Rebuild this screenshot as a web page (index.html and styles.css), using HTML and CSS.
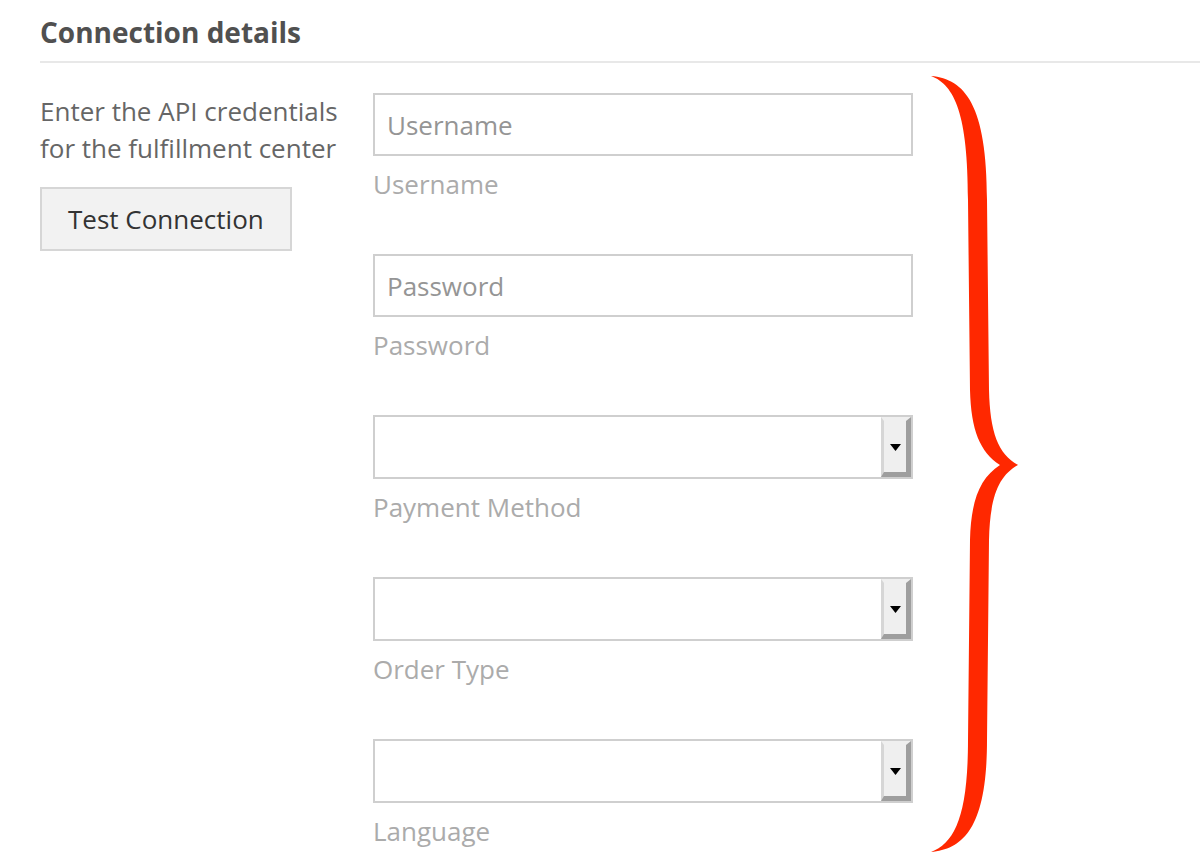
FILE: index.html
```html
<!DOCTYPE html>
<html lang="en">
<head>
<meta charset="utf-8">
<title>Connection details</title>
<link rel="stylesheet" href="styles.css">
</head>
<body>
<div class="page">
  <h2 class="section-title">Connection details</h2>
  <div class="section-row">
    <div class="intro">
      <p class="intro-text">Enter the API credentials for the fulfillment center</p>
      <button class="btn" type="button">Test Connection</button>
    </div>
    <div class="fields">
      <div class="field">
        <input class="text-input" type="text" placeholder="Username">
        <div class="field-label">Username</div>
      </div>
      <div class="field">
        <input class="text-input" type="password" placeholder="Password">
        <div class="field-label">Password</div>
      </div>
      <div class="field">
        <div class="select-box"><span class="select-value"></span><span class="select-btn"><svg class="select-arrow" width="11" height="7" viewBox="0 0 11 7"><path d="M0 0H11L5.5 7Z" fill="#000"/></svg></span></div>
        <div class="field-label">Payment Method</div>
      </div>
      <div class="field">
        <div class="select-box"><span class="select-value"></span><span class="select-btn"><svg class="select-arrow" width="11" height="7" viewBox="0 0 11 7"><path d="M0 0H11L5.5 7Z" fill="#000"/></svg></span></div>
        <div class="field-label">Order Type</div>
      </div>
      <div class="field">
        <div class="select-box"><span class="select-value"></span><span class="select-btn"><svg class="select-arrow" width="11" height="7" viewBox="0 0 11 7"><path d="M0 0H11L5.5 7Z" fill="#000"/></svg></span></div>
        <div class="field-label">Language</div>
      </div>
    </div>
  </div>
</div>
<svg class="brace" width="110" height="790" viewBox="920 70 110 790" aria-hidden="true">
  <path fill="#ff2800" d="M931,76 C965,79 987,105 987,200 L989,390 C990,432 998,454 1018,465 C998,476 990,498 989,540 L987,740 C987,825 965,849 931,852 C955,843 968,815 968,740 L970,540 C971,500 980,478 1000,465 C980,452 971,430 970,390 L968,200 C968,115 955,85 931,76 Z"/>
</svg>
</body>
</html>
```

FILE: styles.css
```css
* { box-sizing: border-box; }
html, body {
  margin: 0;
  padding: 0;
  background: #fff;
}
body {
  font-family: "Open Sans", "Liberation Sans", sans-serif;
  width: 1200px;
  height: 864px;
  overflow: hidden;
  position: relative;
}
.page {
  padding-left: 40px;
}
.section-title {
  margin: 0;
  padding-top: 13px;
  padding-bottom: 9px;
  font-size: 28px;
  line-height: 39px;
  font-weight: 700;
  color: #505050;
  border-bottom: 2px solid #e8e8e8;
}
.section-row {
  display: flex;
  margin-top: 30px;
}
.intro {
  width: 333px;
  flex: none;
}
.intro-text {
  margin: 0;
  width: 305px;
  font-size: 26px;
  line-height: 36.5px;
  color: #666;
}
.btn {
  margin-top: 21px;
  display: block;
  font-family: inherit;
  font-size: 26px;
  line-height: 36px;
  color: #333;
  background: #f2f2f2;
  border: 2px solid #d6d6d6;
  padding: 12px 26px;
  border-radius: 0;
  height: 64px;
}
.fields {
  width: 540px;
}
.field {
  margin-bottom: 52px;
}
.text-input {
  display: block;
  width: 540px;
  height: 63px;
  margin: 0;
  padding: 0 12px;
  border: 2px solid #cfcfcf;
  border-radius: 0;
  font-family: inherit;
  font-size: 26px;
  color: #333;
  background: #fff;
  outline: none;
}
.text-input::placeholder {
  color: #959595;
  opacity: 1;
}
.field-label {
  margin-top: 10px;
  font-size: 26px;
  line-height: 36px;
  color: #ababab;
}
.select-box {
  display: flex;
  width: 540px;
  height: 64px;
  border: 2px solid #cfcfcf;
  background: #fff;
}
.select-value {
  flex: 1;
}
.select-btn {
  width: 30px;
  flex: none;
  display: flex;
  align-items: center;
  justify-content: center;
  background: #efefef;
  border-left: 3px solid #d6d6d6;
  border-top: 4px solid #efefef;
  border-right: 5px solid #9e9e9e;
  border-bottom: 5px solid #9e9e9e;
}
.select-arrow {
  display: block;
  margin-top: 2px;
}
.brace {
  position: absolute;
  left: 920px;
  top: 70px;
  pointer-events: none;
}
```
